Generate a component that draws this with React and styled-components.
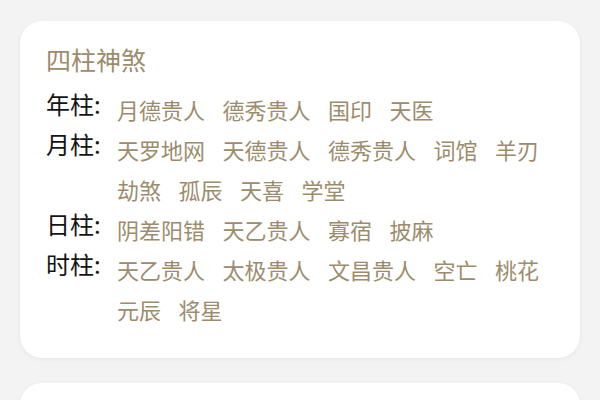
import React from "react";
import styled, { createGlobalStyle } from "styled-components";

const Global = createGlobalStyle`
  html, body {
    margin: 0;
    padding: 0;
    background: #f3f3f3;
    font-family: "Noto Sans CJK SC", "Noto Sans", sans-serif;
  }
`;

const Page = styled.div`
  display: flex;
  flex-direction: column;
  gap: 25px;
  padding: 21px 20px 0;
  height: 400px;
  box-sizing: border-box;
  overflow: hidden;
`;

const Card = styled.section`
  background: #ffffff;
  border-radius: 22px;
  box-shadow: 0 1px 5px rgba(0, 0, 0, 0.06);
  padding: ${(p) => p.$pad || "20px 26px 29px"};
  min-height: ${(p) => p.$minH || "auto"};
  flex-shrink: 0;
`;

const Title = styled.h2`
  margin: 0 0 12px;
  font-size: 25px;
  line-height: 36px;
  font-weight: 400;
  color: #9d8c6c;
`;

const Row = styled.div`
  display: flex;
  align-items: flex-start;
`;

const Label = styled.div`
  width: 71px;
  flex-shrink: 0;
  font-size: 24px;
  line-height: 30px;
  color: #141414;
  white-space: nowrap;
`;

const Items = styled.div`
  flex: 1;
  display: flex;
  flex-wrap: wrap;
  column-gap: 17.5px;
`;

const Item = styled.span`
  font-size: 22px;
  line-height: 40px;
  color: #9d8c6c;
  white-space: nowrap;
`;

const data = [
  { label: "年柱:", items: ["月德贵人", "德秀贵人", "国印", "天医"] },
  { label: "月柱:", items: ["天罗地网", "天德贵人", "德秀贵人", "词馆", "羊刃", "劫煞", "孤辰", "天喜", "学堂"] },
  { label: "日柱:", items: ["阴差阳错", "天乙贵人", "寡宿", "披麻"] },
  { label: "时柱:", items: ["天乙贵人", "太极贵人", "文昌贵人", "空亡", "桃花", "元辰", "将星"] },
];

export default function App() {
  return (
    <>
      <Global />
      <Page>
        <Card>
          <Title>四柱神煞</Title>
          {data.map((r) => (
            <Row key={r.label}>
              <Label>{r.label}</Label>
              <Items>
                {r.items.map((it, i) => (
                  <Item key={i}>{it}</Item>
                ))}
              </Items>
            </Row>
          ))}
        </Card>
        <Card $pad="0" $minH="120px" />
      </Page>
    </>
  );
}
